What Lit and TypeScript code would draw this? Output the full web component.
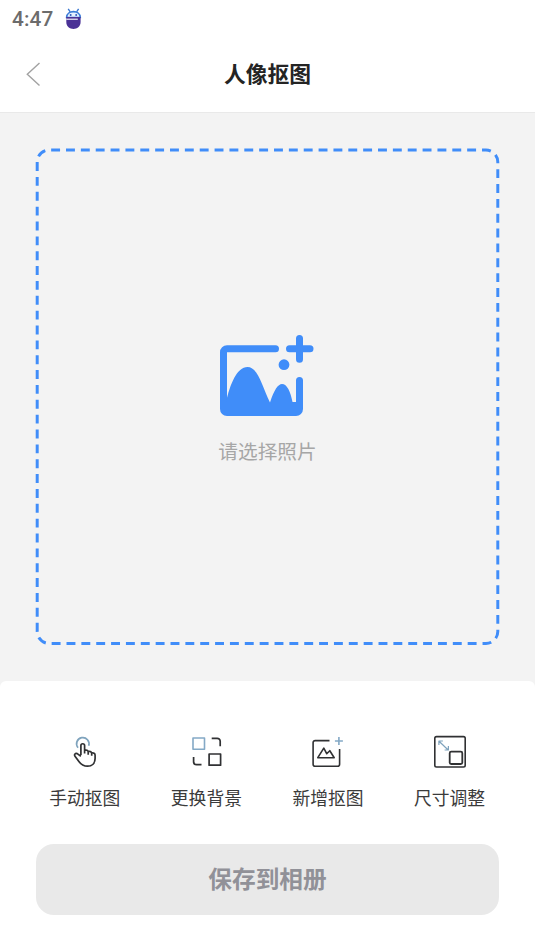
import { LitElement, html, css, svg } from "lit";
import { customElement } from "lit/decorators.js";

const handIcon = svg`
  <g transform="translate(2 1)">
    <path d="M8 11.700A6.200 6.200 0 1 1 18.700 9.700" stroke="#7fa3bd" stroke-width="1.700"/>
    <path d="M10.900 19V9.600a1.850 1.850 0 0 1 3.700 0v5.200l.4-.6c1.400-.5 2.800.2 3.200 1.500 1.500-.5 3 .1 3.500 1.400 1.800-.5 3.400.4 3.400 2.100v3.400c0 4.700-3 7.600-7.600 7.600-4.200 0-6.300-1.500-8.600-4.700l-3.900-5.300c-1.200-1.700.4-3.400 2.200-2.600l3.700 2.700M14.600 14.500v3.100M18.200 15.700v3M21.700 17.100v2.600" stroke="#303133" stroke-width="1.700"/>
  </g>`;

const swapIcon = svg`
  <g transform="translate(1.700 .7)">
    <rect x="2.300" y="2.300" width="11.500" height="11.300" stroke="#84a9c6" stroke-width="1.600"/>
    <rect x="18.400" y="18.300" width="11.500" height="11.200" stroke="#303133" stroke-width="1.700"/>
    <path d="M21 2.600h5.500a3 3 0 0 1 3 3v4.900M2.900 21.300v4.700a3 3 0 0 0 3 3h4.900" stroke="#303133" stroke-width="1.700"/>
  </g>`;

const addIcon = svg`
  <path d="M18.500 5.600H4.100a2 2 0 0 0-2 2v21.700a2 2 0 0 0 2 2h22.500a2 2 0 0 0 2-2V14" stroke="#303133" stroke-width="1.600"/>
  <path d="M27.900 2v8M23.900 6h8" stroke="#84a9c6" stroke-width="1.600"/>
  <path d="M6.800 22.700h16.400l-4.400-7-3.100 3-2.900-5.600z" stroke="#303133" stroke-width="1.600"/>`;

const resizeIcon = svg`
  <rect x="1.800" y="1.600" width="30.400" height="30.400" rx="1.700" stroke="#303133" stroke-width="1.600"/>
  <rect x="16.700" y="16.700" width="12.600" height="12.300" rx="1.500" stroke="#303133" stroke-width="1.800"/>
  <path d="M6.300 6.500l8.600 8.300M5.900 10V6h4M11.600 15h3.800v-4" stroke="#7fa3bd" stroke-width="1.200"/>`;

const tools = [
  { label: "手动抠图", icon: handIcon },
  { label: "更换背景", icon: swapIcon },
  { label: "新增抠图", icon: addIcon },
  { label: "尺寸调整", icon: resizeIcon },
];

@customElement("app-root")
export class AppRoot extends LitElement {
  static styles = css`
    :host {
      display: flex;
      flex-direction: column;
      height: 951px;
      box-sizing: border-box;
      overflow: hidden;
      background: #fff;
      font-family: Roboto, "Noto Sans CJK SC", sans-serif;
    }
    svg { display: block; fill: none; }
    .status {
      height: 37px;
      display: flex;
      align-items: center;
      padding-left: 12px;
      gap: 11px;
      font-size: 20.800px;
      letter-spacing: 0.150px;
      font-weight: 500;
      color: #6c6c6c;
      box-sizing: border-box;
    }
    .header {
      height: 76px;
      box-sizing: border-box;
      border-bottom: 1px solid #e9e9e9;
      display: grid;
      grid-template-columns: 60px 1fr 60px;
      align-items: center;
    }
    .back { margin: 0 0 2px 25px; }
    .title {
      margin: 0;
      text-align: center;
      font-size: 21.800px;
      line-height: 32px;
      font-weight: 700;
      color: #242424;
    }
    .canvas {
      height: 578px;
      flex: none;
      box-sizing: border-box;
      background: #f3f3f3;
      padding: 35px 35px 0;
    }
    .picker {
      position: relative;
      width: 465px;
      height: 497px;
      display: flex;
      flex-direction: column;
      align-items: center;
    }
    .outline { position: absolute; inset: 0; }
    .picture { margin: 185px 2px 0 0; }
    .hint {
      margin-top: 22px;
      font-size: 19.700px;
      line-height: 28px;
      color: #a6a6a6;
    }
    .sheet {
      position: relative;
      flex: 1;
      margin-top: -10px;
      background: #fff;
      border-radius: 6px 6px 0 0;
      padding: 54px 24px 0;
    }
    .tools { display: grid; grid-template-columns: repeat(4, 121.600px); }
    .tool {
      display: flex;
      flex-direction: column;
      align-items: center;
      font-size: 17.800px;
      line-height: 26px;
      color: #3b3b3b;
      gap: 17px;
    }
    .save {
      display: block;
      margin: 32px 12px 0;
      width: 463px;
      height: 71px;
      border: 0;
      border-radius: 18px;
      background: #e9e9e9;
      color: #919198;
      font: 700 23.700px/69px Roboto, "Noto Sans CJK SC", sans-serif;
      padding: 2px 0 0;
    }
  `;

  render() {
    return html`
      <div class="status">
        <span>4:47</span>
        <svg width="17" height="22" viewBox="0 0 17 22">
          <path d="M3.200 .8l2 3M13.600 .8l-2 3" stroke="#3c78d0" stroke-width="1.400"/>
          <path d="M1.600 9.500C1.600 1.600 15.300 1.600 15.300 9.500z" fill="#e7f2ff" stroke="#397bd7" stroke-width="1.600"/>
          <circle cx="5.700" cy="7" r="1" fill="#315bbb"/>
          <circle cx="11.200" cy="7" r="1" fill="#315bbb"/>
          <path d="M1.300 9h14.300v5c0 9.300-14.300 9.300-14.300 0z" fill="#4a3196"/>
          <path d="M1.300 11.200h11.500" stroke="#fff" stroke-width="1.100"/>
        </svg>
      </div>
      <header class="header">
        <svg class="back" width="16" height="26" viewBox="0 0 16 26">
          <path d="M14.500 2L2.300 13.300L14.500 24.500" stroke="#a2a2a2" stroke-width="1.400"/>
        </svg>
        <h1 class="title">人像抠图</h1>
      </header>
      <main class="canvas">
        <div class="picker">
          <svg class="outline" width="465" height="497" viewBox="0 0 465 497">
            <path d="M2.200 483.600V13.900a11.900 11.900 0 0 1 11.900-11.900H450.900a11.900 11.900 0 0 1 11.900 11.900V483.600a11.900 11.900 0 0 1-11.900 11.900H14.100a11.900 11.900 0 0 1-11.900-11.900z"
              stroke="#408df9" stroke-width="2.970" stroke-dasharray="8.915 5.943"/>
          </svg>
          <svg class="picture" width="96" height="84" viewBox="0 0 96 84">
            <g stroke="#408df9" stroke-width="7" stroke-linecap="round">
              <path d="M56.500 15.800H8a3.500 3.500 0 0 0-3.500 3.500V76a3.500 3.500 0 0 0 3.500 3.500H77A3.500 3.500 0 0 0 80.500 76V47.500M80.500 5.500V26.300M70.500 15.800H91"/>
            </g>
            <path d="M7 80V69.500C11 51 18 34 28.500 34S43 53 51 69.500C55 57 59 51 63 51c5 0 8.500 7.500 10.500 18H79V80z" fill="#408df9"/>
            <circle cx="65" cy="31.700" r="5.400" fill="#408df9"/>
          </svg>
          <div class="hint">请选择照片</div>
        </div>
      </main>
      <section class="sheet">
        <div class="tools">
          ${tools.map(
            (t) => html`<div class="tool">
              <svg width="34" height="34" viewBox="0 0 34 34" stroke-linejoin="round">${t.icon}</svg>
              <span>${t.label}</span>
            </div>`
          )}
        </div>
        <button class="save">保存到相册</button>
      </section>
    `;
  }
}
